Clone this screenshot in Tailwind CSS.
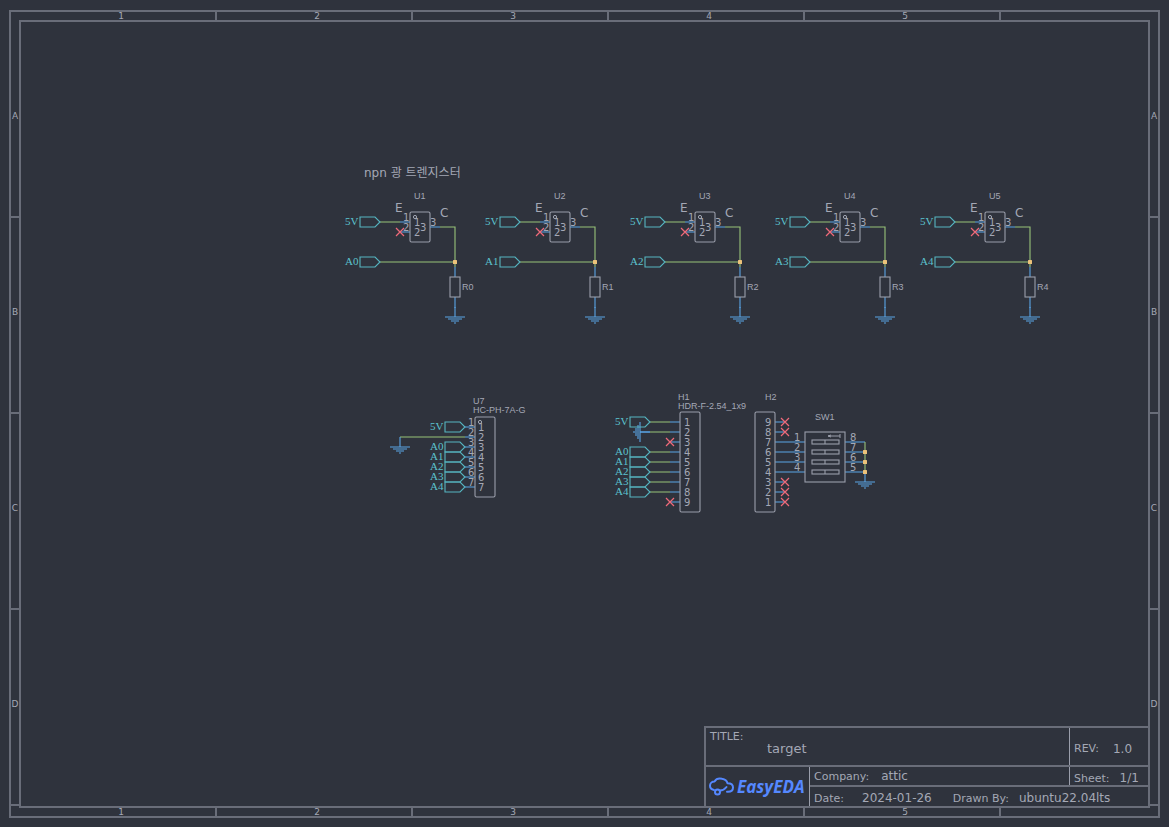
<!DOCTYPE html>
<html lang="en">
<head>
<meta charset="utf-8">
<title>target - Schematic</title>
<script src="https://cdn.jsdelivr.net/npm/@tailwindcss/browser@4"></script>
</head>
<body class="bg-[#2f333d] text-[#a4a8b5] font-['DejaVu_Sans','Noto_Sans_CJK_KR',sans-serif]">
<div class="h-screen pt-[10px] pb-[9px] px-[9px]">
  <div class="grid h-full grid-cols-[8px_1fr_8px] grid-rows-[8px_1fr_8px] overflow-hidden border-2 border-[#696d79] text-[9px] leading-none">
    <!-- Column rulers -->
    <div class="col-span-3 col-start-1 row-start-1 flex overflow-hidden *:flex *:w-[196px] *:shrink-0 *:items-center *:justify-center *:border-r-2 *:border-[#696d79] *:pl-[6px]">
      <div class="ml-[10px]">1</div><div>2</div><div>3</div><div>4</div><div>5</div>
    </div>
    <div class="col-span-3 col-start-1 row-start-3 flex overflow-hidden *:flex *:w-[196px] *:shrink-0 *:items-center *:justify-center *:border-r-2 *:border-[#696d79] *:pl-[6px]">
      <div class="ml-[10px]">1</div><div>2</div><div>3</div><div>4</div><div>5</div>
    </div>
    <!-- Row rulers -->
    <div class="col-start-1 row-span-3 row-start-1 flex flex-col overflow-hidden *:flex *:h-[196px] *:shrink-0 *:items-center *:justify-center *:border-b-2 *:border-[#696d79] *:pb-[6px]">
      <div class="mt-[10px]">A</div><div>B</div><div>C</div><div>D</div>
    </div>
    <div class="col-start-3 row-span-3 row-start-1 flex flex-col overflow-hidden *:flex *:h-[196px] *:shrink-0 *:items-center *:justify-center *:border-b-2 *:border-[#696d79] *:pb-[6px]">
      <div class="mt-[10px]">A</div><div>B</div><div>C</div><div>D</div>
    </div>

    <main class="relative col-start-2 row-start-2 min-h-0 border-2 border-[#696d79]">
      <svg class="block h-full w-full" viewBox="21 22 1127 784" preserveAspectRatio="xMinYMin meet" fill="none" stroke-width="1.1" role="img" aria-label="Schematic">
        <defs>
          <path id="port" d="M0-5H15L20 0L15 5H0Z" stroke="#56b6c2"/>
          <path id="nc" d="M-4-4L4 4M4-4L-4 4" stroke="#f0697a" stroke-width="1.2"/>
          <path id="gnd" d="M0-10V0M-10 0H10M-7 2H7M-4 4H4M-1 6H1" stroke="#5aa5e6"/>
          <rect id="dot" x="-2" y="-2" width="4" height="4" rx="0.5" fill="#ecc27a"/>
          <g id="dip" stroke="#9a9eab"><rect x="0" y="0" width="27" height="4"/><path d="M13 0V4"/></g>
          <g id="sensor">
            <g stroke="#98c379"><path d="M380 222H400M440 227H455V267M380 262H455"/></g>
            <g stroke="#5aa5e6"><path d="M400 222H410M400 232H410M430 227H440M455 267V277M455 297V308"/></g>
            <rect x="410" y="212" width="20" height="30" rx="1.5" stroke="#9a9eab"/>
            <circle cx="415" cy="217" r="1.6" stroke="#a4a8b5" stroke-width="1"/>
            <rect x="450" y="277" width="10" height="20" stroke="#9a9eab"/>
            <use href="#port" x="360" y="222"/><use href="#port" x="360" y="262"/>
            <use href="#nc" x="400" y="232"/><use href="#dot" x="455" y="262"/><use href="#gnd" x="455" y="317"/>
            <g fill="#a4a8b5" font-size="10">
              <text x="403" y="221">1</text><text x="403" y="231">2</text><text x="430" y="226">3</text>
              <text x="414" y="226">1</text><text x="414" y="236">2</text><text x="420" y="231">3</text>
              <text x="395" y="212" font-size="12">E</text><text x="440" y="217" font-size="12">C</text>
            </g>
            <text x="345" y="225" fill="#5cc3cf" font-size="11" font-family="Liberation Serif, serif">5V</text>
          </g>
        </defs>

        <text x="364" y="177" font-size="12" fill="#a4a8b5">npn 광 트렌지스터</text>

        <!-- Phototransistor stages -->
        <use href="#sensor"/><use href="#sensor" x="140"/><use href="#sensor" x="285"/><use href="#sensor" x="430"/><use href="#sensor" x="575"/>
        <g fill="#a4a8b5" font-size="9" font-family="Liberation Sans, sans-serif">
          <text x="414" y="199">U1</text><text x="554" y="199">U2</text><text x="699" y="199">U3</text><text x="844" y="199">U4</text><text x="989" y="199">U5</text>
          <text x="462" y="290">R0</text><text x="602" y="290">R1</text><text x="747" y="290">R2</text><text x="892" y="290">R3</text><text x="1037" y="290">R4</text>
          <text x="473" y="404">U7</text><text x="473" y="413">HC-PH-7A-G</text>
          <text x="678" y="400">H1</text><text x="678" y="409">HDR-F-2.54_1x9</text>
          <text x="765" y="400">H2</text><text x="815" y="420">SW1</text>
        </g>
        <g fill="#5cc3cf" font-size="11" font-family="Liberation Serif, serif">
          <text x="345" y="265">A0</text><text x="485" y="265">A1</text><text x="630" y="265">A2</text><text x="775" y="265">A3</text><text x="920" y="265">A4</text>
          <text x="430" y="430">5V</text><text x="430" y="450">A0</text><text x="430" y="460">A1</text><text x="430" y="470">A2</text><text x="430" y="480">A3</text><text x="430" y="490">A4</text>
          <text x="615" y="425">5V</text><text x="615" y="455">A0</text><text x="615" y="465">A1</text><text x="615" y="475">A2</text><text x="615" y="485">A3</text><text x="615" y="495">A4</text>
        </g>

        <!-- U7 connector -->
        <path d="M400 437H465" stroke="#98c379"/>
        <path d="M465 427H475M465 437H475M465 447H475M465 457H475M465 467H475M465 477H475M465 487H475" stroke="#5aa5e6"/>
        <use href="#gnd" x="400" y="447"/>
        <rect x="475" y="417" width="20" height="80" rx="1.5" stroke="#9a9eab"/>
        <circle cx="480" cy="422" r="1.6" stroke="#a4a8b5" stroke-width="1"/>
        <use href="#port" x="445" y="427"/><use href="#port" x="445" y="447"/><use href="#port" x="445" y="457"/><use href="#port" x="445" y="467"/><use href="#port" x="445" y="477"/><use href="#port" x="445" y="487"/>
        <g fill="#a4a8b5" font-size="10">
          <text x="468" y="426">1</text><text x="468" y="436">2</text><text x="468" y="446">3</text><text x="468" y="456">4</text><text x="468" y="466">5</text><text x="468" y="476">6</text><text x="468" y="486">7</text>
          <text x="478" y="431">1</text><text x="478" y="441">2</text><text x="478" y="451">3</text><text x="478" y="461">4</text><text x="478" y="471">5</text><text x="478" y="481">6</text><text x="478" y="491">7</text>
        </g>

        <!-- H1 header -->
        <path d="M650 422H670M650 432H670M650 452H670M650 462H670M650 472H670M650 482H670M650 492H670" stroke="#98c379"/>
        <path d="M670 422H680M670 432H680M670 442H680M670 452H680M670 462H680M670 472H680M670 482H680M670 492H680M670 502H680" stroke="#5aa5e6"/>
        <use href="#gnd" transform="translate(640 432) rotate(90)"/>
        <path d="M640 432H650" stroke="#5aa5e6"/>
        <rect x="680" y="412" width="20" height="100" rx="1.5" stroke="#9a9eab"/>
        <use href="#port" x="630" y="422"/><use href="#port" x="630" y="452"/><use href="#port" x="630" y="462"/><use href="#port" x="630" y="472"/><use href="#port" x="630" y="482"/><use href="#port" x="630" y="492"/>
        <use href="#nc" x="670" y="442"/><use href="#nc" x="670" y="502"/>
        <g fill="#a4a8b5" font-size="10">
          <text x="684" y="426">1</text><text x="684" y="436">2</text><text x="684" y="446">3</text><text x="684" y="456">4</text><text x="684" y="466">5</text><text x="684" y="476">6</text><text x="684" y="486">7</text><text x="684" y="496">8</text><text x="684" y="506">9</text>
        </g>

        <!-- H2 header and SW1 switch -->
        <path d="M775 422H785M775 432H785M775 442H805M775 452H805M775 462H805M775 472H805M775 482H785M775 492H785M775 502H785M845 442H865M845 452H865M845 462H865M845 472H865" stroke="#5aa5e6"/>
        <path d="M865 442V472" stroke="#98c379"/>
        <use href="#gnd" x="865" y="482"/>
        <rect x="755" y="412" width="20" height="100" rx="1.5" stroke="#9a9eab"/>
        <rect x="805" y="432" width="40" height="50" stroke="#9a9eab"/>
        <path d="M828 436H840M840 434V438M831 435L828 436L831 437" stroke="#9a9eab" stroke-width="1"/>
        <use href="#dip" x="812" y="440"/><use href="#dip" x="812" y="450"/><use href="#dip" x="812" y="460"/><use href="#dip" x="812" y="470"/>
        <use href="#nc" x="785" y="422"/><use href="#nc" x="785" y="432"/><use href="#nc" x="785" y="482"/><use href="#nc" x="785" y="492"/><use href="#nc" x="785" y="502"/>
        <use href="#dot" x="865" y="452"/><use href="#dot" x="865" y="462"/><use href="#dot" x="865" y="472"/>
        <g fill="#a4a8b5" font-size="10">
          <text x="765" y="426">9</text><text x="765" y="436">8</text><text x="765" y="446">7</text><text x="765" y="456">6</text><text x="765" y="466">5</text><text x="765" y="476">4</text><text x="765" y="486">3</text><text x="765" y="496">2</text><text x="765" y="506">1</text>
          <text x="794" y="441">1</text><text x="794" y="451">2</text><text x="794" y="461">3</text><text x="794" y="471">4</text>
          <text x="850" y="441">8</text><text x="850" y="451">7</text><text x="850" y="461">6</text><text x="850" y="471">5</text>
        </g>
      </svg>

      <!-- Title block -->
      <section class="absolute right-0 bottom-0 flex w-[444px] flex-col border-t-2 border-l-2 border-[#696d79] text-[11px] leading-none whitespace-nowrap">
        <div class="flex h-[39px] border-b-2 border-[#696d79]">
          <div class="flex flex-1 flex-col pt-[3px] pl-1">
            <span>TITLE:</span>
            <span class="pl-[57px] text-[13px]">target</span>
          </div>
          <div class="flex w-[79px] items-center gap-[14px] border-l border-[#9a9eab] pt-1 pl-1"><span>REV:</span><span class="text-[12px]">1.0</span></div>
        </div>
        <div class="flex">
          <div class="flex w-[104px] items-center border-r border-[#9a9eab] pl-[2px]">
            <svg class="h-[36px] w-[100px]" viewBox="708 768 100 36" fill="none" stroke="#5588ff" stroke-width="2" stroke-linecap="round" stroke-linejoin="round" role="img" aria-label="EasyEDA">
              <path d="M714 789C711.500 788.500 710 787 710 784.800C710 782.200 712 780.500 714.500 780.500C716 778 719 777.200 722 777.800C725 778.300 727 780.200 727.500 782.300C731 782.300 733 784 733 786.500C733 789.500 730.500 790.800 728 790.800H727"/>
              <circle cx="717.500" cy="791" r="2.500"/>
              <path d="M720 789.500C722.500 789.500 724.500 788.500 726.500 786"/>
              <text x="737" y="792" font-family="Open Sans, sans-serif" font-size="17" font-weight="700" font-style="italic" fill="#5588ff" stroke="none">EasyEDA</text>
            </svg>
          </div>
          <div class="flex-1">
            <div class="flex h-[20px] border-b-2 border-[#696d79]">
              <div class="flex flex-1 items-center gap-3 pl-1"><span>Company:</span><span class="text-[12px]">attic</span></div>
              <div class="flex w-[79px] items-center gap-[10px] border-l border-[#9a9eab] pt-1 pl-1"><span>Sheet:</span><span class="text-[12px]">1/1</span></div>
            </div>
            <div class="flex h-[19px] items-center pt-[3px] pl-1">
              <span>Date:</span><span class="pl-[18px] text-[12px]">2024-01-26</span>
              <span class="pl-[21px]">Drawn By:</span><span class="pl-[10px] text-[12px]">ubuntu22.04lts</span>
            </div>
          </div>
        </div>
      </section>
    </main>
  </div>
</div>
</body>
</html>
